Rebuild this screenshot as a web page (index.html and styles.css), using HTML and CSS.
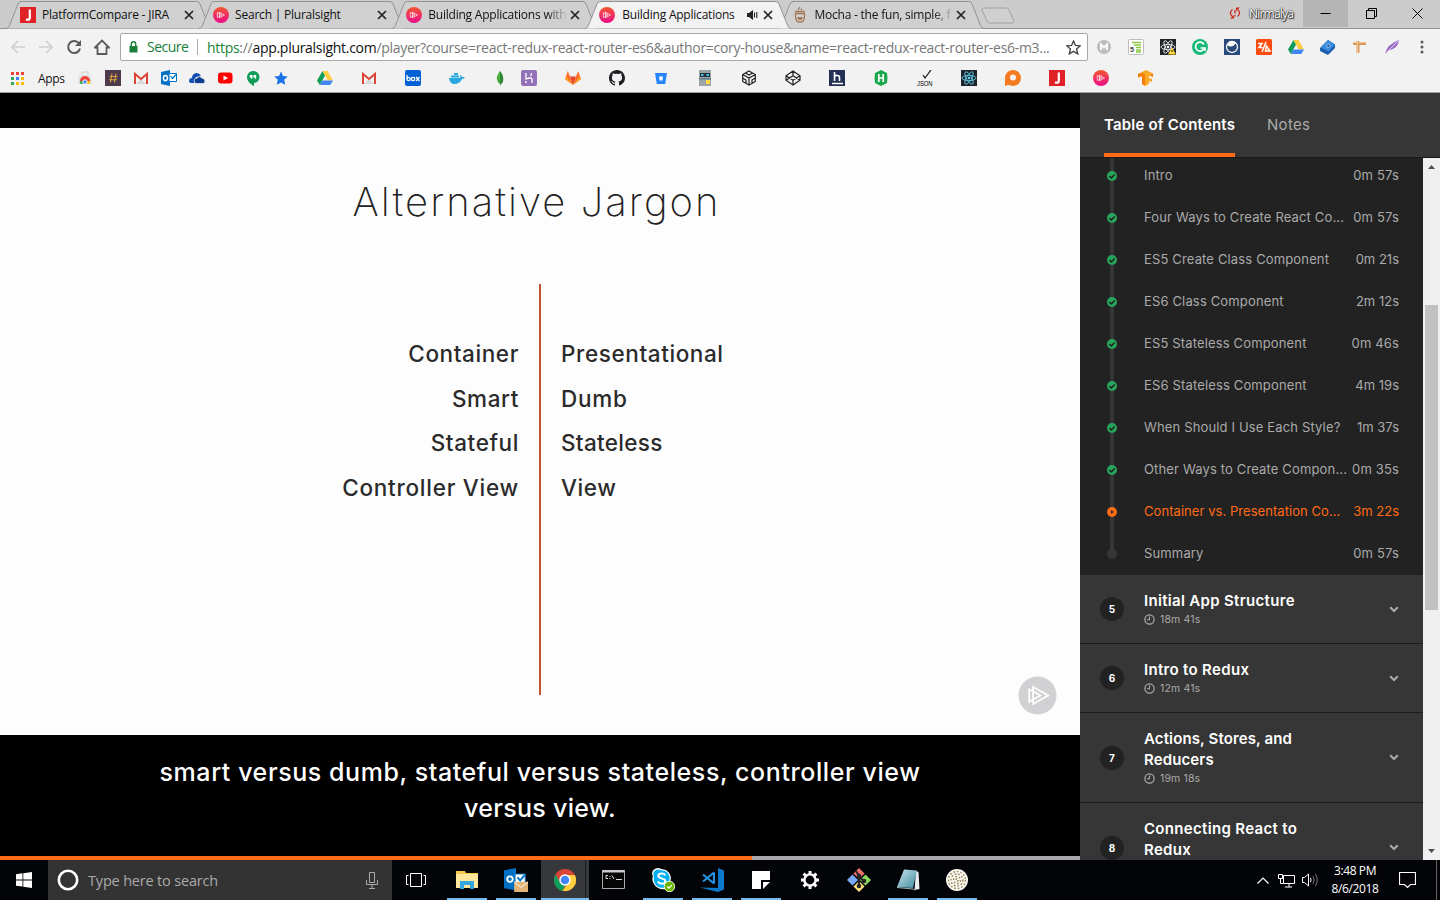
FILE: index.html
```html
<!DOCTYPE html>
<html lang="en">
<head>
<meta charset="utf-8">
<title>Building Applications with React and Redux</title>
<link rel="stylesheet" href="styles.css">
</head>
<body>
<svg class="defs" width="0" height="0">
  <defs>
    <linearGradient id="pink" x1="0" y1="0" x2="0" y2="1"><stop offset="0" stop-color="#f2562f"/><stop offset="1" stop-color="#ec0c8c"/></linearGradient>
    <linearGradient id="pad" x1="0" y1="0" x2="1" y2="1"><stop offset="0" stop-color="#c7e6ea"/><stop offset="1" stop-color="#3f8ba0"/></linearGradient>
    <symbol id="tab" viewBox="0 0 206 29"><path d="M0 28.5C3 28 3 26 4 24L12 4Q13 1.5 15 1.5H191Q193 1.5 194 4L202 24C203 26 203 28 206 28.5" stroke="#939393"/></symbol>
    <symbol id="ps" viewBox="0 0 16 16"><circle cx="8" cy="8" r="8" fill="url(#pink)"/><path d="M4.300 5.500L9 8l-4.700 2.600zM6.500 5.200L11.500 8l-5 2.800z" fill="none" stroke="#fff" stroke-width=".8" stroke-opacity=".85"/></symbol>
    <symbol id="jira" viewBox="0 0 16 16"><path fill="#e02128" d="M0 0h16v16H0z"/><path d="M9.800 2.500v8.200q0 2-2 2-1 0-1.800-.5" fill="none" stroke="#fff" stroke-width="2.200"/></symbol>
    <symbol id="close" viewBox="0 0 10 10"><path d="M1 1l8 8M9 1L1 9" stroke="#222" stroke-width="1.700"/></symbol>
    <symbol id="gmail" viewBox="0 0 16 16"><path fill="#f3f3f3" d="M1 3h14v11H1z"/><path fill="#d9d9d9" d="M3 14l5-5 5 5z"/><path d="M2 14V4l6 5 6-5v10" fill="none" stroke="#db4437" stroke-width="2"/></symbol>
    <symbol id="drive" viewBox="0 0 16 16"><path fill="#0f9d58" d="M5.500 1L8 5.500 2.800 15 0 10.500z"/><path fill="#ffcd40" d="M5.500 1h5L16 10.500h-5.200z"/><path fill="#4285f4" d="M5.300 10.500H16L13.300 15H2.800z"/></symbol>
    <symbol id="react" viewBox="0 0 16 16"><path fill="#20232a" d="M0 0h16v16H0z"/><g fill="none" stroke="currentColor" stroke-width=".8"><ellipse cx="8" cy="8" rx="7" ry="2.600"/><ellipse cx="8" cy="8" rx="7" ry="2.600" transform="rotate(60 8 8)"/><ellipse cx="8" cy="8" rx="7" ry="2.600" transform="rotate(120 8 8)"/></g><circle cx="8" cy="8" r="1.300" fill="currentColor"/></symbol>
    <symbol id="done" viewBox="0 0 10 10"><circle cx="5" cy="5" r="5" fill="#26a65b"/><path d="M2.400 5.100l1.900 1.800 3.400-3.500" fill="none" stroke="#222" stroke-width="1.500"/></symbol>
    <symbol id="clock" viewBox="0 0 10 10"><circle cx="5" cy="5" r="4.200" fill="none" stroke="#aaa" stroke-width="1.100"/><path d="M5 2.300V5.200H2.700" fill="none" stroke="#aaa"/></symbol>
    <symbol id="chev" viewBox="0 0 10 7"><path d="M1.200 1.200L5 5l3.800-3.800" fill="none" stroke="#aaa" stroke-width="2.100"/></symbol>
    <symbol id="outlook" viewBox="0 0 16 16"><path fill="#0072c6" d="M0 2l9-2v16l-9-2z"/><path fill="#fff" stroke="#0072c6" d="M8 3.500h7.500v8H8z"/><path d="M9.500 6l2 2.500 3.500-4" fill="none" stroke="#0072c6" stroke-width="1.200"/><ellipse cx="4.400" cy="8" rx="2" ry="2.600" fill="none" stroke="#fff" stroke-width="1.500"/></symbol>
  </defs>
</svg>

<div class="tabstrip">
  <div class="tab"><svg class="shape"><use href="#tab"/></svg><svg class="fav"><use href="#jira"/></svg><span class="name jira-name">PlatformCompare - JIRA</span><svg class="x"><use href="#close"/></svg></div>
  <div class="tab"><svg class="shape"><use href="#tab"/></svg><svg class="fav"><use href="#ps"/></svg><span class="name">Search | Pluralsight</span><svg class="x"><use href="#close"/></svg></div>
  <div class="tab"><svg class="shape"><use href="#tab"/></svg><svg class="fav"><use href="#ps"/></svg><span class="name fade">Building Applications with</span><svg class="x"><use href="#close"/></svg></div>
  <div class="tab active"><svg class="shape"><use href="#tab"/></svg><svg class="fav"><use href="#ps"/></svg><span class="name">Building Applications</span><svg class="audio" viewBox="0 0 11 10"><path fill="#222" d="M0 3h2l4-3v10L2 7H0z"/><path d="M7.500 2.500v5M9.800 2v6" stroke="#222" stroke-width="1.100"/></svg><svg class="x"><use href="#close"/></svg></div>
  <div class="tab"><svg class="shape"><use href="#tab"/></svg><svg class="fav" viewBox="0 0 16 16"><g fill="none" stroke="#a07858" stroke-width="1.300"><path d="M3.500 6.500h9v2q0 5-2.500 6.500H6Q3.500 13.500 3.500 8.500z"/><path d="M3 4.500h10M6 3l2-3M9 3l1-1.500"/></g><path fill="#a07858" d="M5 10h6l-1.500 3h-3z"/></svg><span class="name fade">Mocha - the fun, simple, f</span><svg class="x"><use href="#close"/></svg></div>
  <svg class="newtab" viewBox="0 0 34 17"><path d="M3 1H25Q27 1 28 3L33 14Q33 16 31 16H9Q7 16 6 14L1 3Q1 1 3 1z" fill="#d0d0d0" stroke="#a2a2a2"/></svg>
  <div class="window">
    <svg class="sync" viewBox="0 0 12 12"><g fill="none" stroke="#d2281e" stroke-width="1.300"><path d="M3.500 2.500C.8 4 .8 8 3.500 9.500M8.500 9.500C11.200 8 11.200 4 8.500 2.500M6 3v3.500M6 8v1.500"/></g><path fill="#d2281e" d="M1 11.500h4V8zM11 .5H7V4z"/></svg>
    <span class="user">Nirmalya</span>
    <span class="wbtn min"><svg width="11" height="11"><path d="M.5 5.500h10" stroke="#000"/></svg></span>
    <span class="wbtn"><svg width="11" height="11"><path d="M.5 2.500h8v8h-8zM2.500 2.500v-2h8v8h-2" fill="none" stroke="#000"/></svg></span>
    <span class="wbtn"><svg width="11" height="11"><path d="M.5.5l10 10M10.500.5l-10 10" stroke="#000"/></svg></span>
  </div>
</div>

<div class="toolbar">
  <div class="nav">
    <svg width="16" height="16" viewBox="0 0 16 16"><path d="M15 8H2M8 2L2 8l6 6" fill="none" stroke="#d0d0d0" stroke-width="1.700"/></svg>
    <svg width="16" height="16" viewBox="0 0 16 16"><path d="M1 8h13M8 2l6 6-6 6" fill="none" stroke="#d0d0d0" stroke-width="1.700"/></svg>
    <svg width="16" height="16" viewBox="0 0 16 16"><path d="M13 4.500A6 6 0 1 0 14 9.500" fill="none" stroke="#5a5a5a" stroke-width="2"/><path fill="#5a5a5a" d="M15 1v6H9z"/></svg>
    <svg width="16" height="16" viewBox="0 0 16 16"><path d="M1 8.500L8 1.500l7 7h-2.500V15h-9V8.500z" fill="none" stroke="#5a5a5a" stroke-width="1.800"/></svg>
  </div>
  <div class="omnibox">
    <svg class="lock" viewBox="0 0 9 12"><path fill="#188038" d="M.5 5h8v6.500h-8z"/><path d="M2.300 5V3a2.200 2.200 0 0 1 4.400 0v2" fill="none" stroke="#188038" stroke-width="1.400"/></svg>
    <span class="secure">Secure</span>
    <span class="url"><span class="https">https</span>://<b>app.pluralsight.com</b>/player?course=react-redux-react-router-es6&amp;author=cory-house&amp;name=react-redux-react-router-es6-m3...</span>
    <svg class="star" viewBox="0 0 14 14"><path d="M7 1l1.800 4.100 4.400.4-3.300 3 1 4.400L7 10.600 3.100 12.900l1-4.400-3.300-3 4.400-.4z" fill="none" stroke="#444" stroke-width="1.300"/></svg>
  </div>
  <div class="exts">
    <svg viewBox="0 0 16 16"><circle cx="8" cy="8" r="7" fill="#bdbdbd"/><path d="M5 11V5.500l3 3 3-3V11" fill="none" stroke="#fff" stroke-width="1.800"/></svg>
    <svg viewBox="0 0 16 16"><rect x=".5" y=".5" width="15" height="15" rx="1" fill="#fff" stroke="#bbb"/><path d="M4 3.500h9M6 6h7M8 8.500h5M8 11h5M8 13h5" stroke="#8bc53f" stroke-width="1.300"/><text x="2" y="13" class="tiny" fill="#444">5</text></svg>
    <svg viewBox="0 0 16 16" color="#fff"><use href="#react"/><path fill="#ffd83a" d="M12 8.500l4 7H8z"/><path d="M12 11v2" stroke="#222"/></svg>
    <svg viewBox="0 0 16 16"><circle cx="8" cy="8" r="8" fill="#15b877"/><path d="M12 5.500A4.500 4.500 0 1 0 12.300 9M8.500 9H13v3" fill="none" stroke="#fff" stroke-width="1.700"/></svg>
    <svg viewBox="0 0 16 16"><path fill="#2a4a7b" d="M0 0h16v16H0z"/><circle cx="8" cy="8" r="5.500" fill="none" stroke="#fff" stroke-width="1.300"/><path d="M3 6q5 4 9-2l-2-2H6z" fill="#fff"/></svg>
    <svg viewBox="0 0 16 16"><rect width="16" height="16" rx="1.500" fill="#ff4a0d"/><path d="M2 4.500h4L3 8.500h3.500M10 3L6 13M9.500 12h4.500L10.500 7z" fill="none" stroke="#fff" stroke-width="1.500"/></svg>
    <svg viewBox="0 0 16 16"><use href="#drive"/></svg>
    <svg viewBox="0 0 16 16"><path fill="#1d5fae" d="M0 9l8-8 7 4.500v3.500L8 16l-8-4z"/><path fill="#3c8be0" d="M1 8.500L8 1l7 4.500-6.500 7z"/><circle cx="8.300" cy="6.800" r="1.700" fill="#1d5fae" stroke="#a5cdf5" stroke-width=".8"/></svg>
    <svg viewBox="0 0 16 16"><path d="M1 4.500h13M6 2v12" stroke="#d99a5b" stroke-width="3"/><path d="M1 3.500h13M5.500 2v12" stroke="#f0c48d"/></svg>
    <svg viewBox="0 0 16 16"><path fill="#9b6cc8" d="M1 15Q3 5 15 1q-1 8-9 10-2 0-4 4z"/><path d="M1 15L14 2" stroke="#dcc7ef"/></svg>
    <svg viewBox="0 0 16 16"><g fill="#5a5a5a"><circle cx="6" cy="3" r="1.500"/><circle cx="6" cy="8" r="1.500"/><circle cx="6" cy="13" r="1.500"/></g></svg>
  </div>
</div>

<div class="bookmarks">
  <div class="apps"><svg viewBox="0 0 13 13"><path fill="#ea4335" d="M0 0h3v3H0zM5 0h3v3H5zM10 0h3v3h-3z"/><path fill="#34a853" d="M0 5h3v3H0zM0 10h3v3H0z"/><path fill="#4285f4" d="M5 5h3v3H5z"/><path fill="#fbbc05" d="M10 5h3v3h-3zM5 10h3v3H5zM10 10h3v3h-3z"/></svg><span>Apps</span></div>
  <div class="bm"><svg viewBox="0 0 16 16"><path fill="#e3e3e3" d="M2 5h12l1 9H1z"/><path d="M5 5V2h6v3" fill="none" stroke="#ccc"/><path fill="#ea4335" d="M3 11a5 5 0 0 1 10 0z"/><path fill="#34a853" d="M2.500 11H6l2 3H3.500z"/><path fill="#fbbc05" d="M13.500 11H10l-2 3h4.500z"/><circle cx="8" cy="12" r="2.200" fill="#4285f4" stroke="#fff"/></svg></div>
  <div class="bm"><svg viewBox="0 0 16 16"><path fill="#4d394b" d="M0 0h16v16H0z"/><path d="M7 3.500l-1.500 9M11 3.500l-1.500 9M4.500 6.500h8M4 9.700h8" stroke="#d9a441" stroke-width="1.100"/></svg></div>
  <div class="bm"><svg><use href="#gmail"/></svg></div>
  <div class="bm"><svg><use href="#outlook"/></svg></div>
  <div class="bm"><svg viewBox="0 0 16 16"><path fill="#1450b4" d="M0 11q0-3 3-3 0-4 4-5 3-.5 5 3l-5 1-2 6H2q-2 0-2-2z"/><path fill="#0b3c91" stroke="#f2f2f2" stroke-width=".7" d="M5 11q0-3 3-3 2-3 5 0 3 1 3 3 0 2.500-2 2.500H8q-3 0-3-2.500z"/></svg></div>
  <div class="bm"><svg viewBox="0 0 16 16"><rect x="1" y="2.500" width="14.500" height="11" rx="3" fill="#f00"/><path fill="#fff" d="M6.500 5.500l4.500 2.500-4.500 2.500z"/></svg></div>
  <div class="bm"><svg viewBox="0 0 16 16"><path fill="#0f9d58" d="M8 1a6 6 0 0 1 1 12v3c-4-2-7-5-7-9a6 6 0 0 1 6-6z"/><path fill="#fff" d="M4.800 5h2.700v3L6.300 9.500V7.700H4.800zM8.500 5h2.700v3L10 9.500V7.700H8.500z"/></svg></div>
  <div class="bm"><svg viewBox="0 0 16 16"><path fill="#1a73e8" d="M8 1.500l2 4.500 4.800.5-3.600 3.300 1 5L8 12.400l-4.200 2.400 1-5L1.200 6.500 6 6z"/></svg></div>
  <div class="bm wide first"><svg><use href="#drive"/></svg></div>
  <div class="bm wide"><svg><use href="#gmail"/></svg></div>
  <div class="bm wide"><svg viewBox="0 0 16 16"><rect width="16" height="16" rx="2" fill="#0061d5"/><path d="M2 5v4" stroke="#fff" stroke-width="1.300"/><circle cx="3.600" cy="9" r="1.600" fill="none" stroke="#fff" stroke-width="1.200"/><circle cx="8" cy="9" r="1.700" fill="none" stroke="#fff" stroke-width="1.300"/><path d="M11 7l3.500 4M14.500 7L11 11" stroke="#fff" stroke-width="1.300"/></svg></div>
  <div class="bm wide"><svg viewBox="0 0 16 16"><path fill="#27a9e0" d="M0 8h11q1-2 0-3 2 0 2 2h3q-1 2-3 2-2 5-8 5-4 0-5-6zM2 5.500h8v2H2zM5 3h4v2H5z"/></svg></div>
  <div class="bm mongo"><svg viewBox="0 0 16 16"><path fill="#4caf3f" d="M8 1q4 5 3 9-1 3-3 4-2-1-3-4-1-4 3-9z"/><path fill="#2e8536" d="M8 1v15l1-2q3-2 2-6 0-3-3-7z"/></svg></div>
  <div class="bm wide"><svg viewBox="0 0 16 16"><rect width="16" height="16" rx="2" fill="#9472b8"/><path d="M5 3v6q5-2 6 0v4M5 11v2M10.500 3q0 2-1 3" fill="none" stroke="#fff" stroke-width="1.300"/></svg></div>
  <div class="bm wide"><svg viewBox="0 0 16 16"><path fill="#e24329" d="M8 15L5 6.500h6z"/><path fill="#fc6d26" d="M8 15L0 9l1-2.500h4zM8 15l8-6-1-2.500h-4zM1 6.500L2.800 1 5 6.500zM15 6.500L13.200 1 11 6.500z"/><path fill="#fca326" d="M8 15L0 9l1-2.500zM8 15l8-6-1-2.500z"/></svg></div>
  <div class="bm wide"><svg viewBox="0 0 16 16"><path fill="#1b1f23" d="M8 0C3.600 0 0 3.600 0 8c0 3.500 2.300 6.500 5.500 7.600.4.100.5-.2.500-.4v-1.500c-2.200.5-2.700-1-2.700-1-.4-.9-.9-1.200-.9-1.200-.7-.5.100-.5.100-.5.800.1 1.200.8 1.200.8.700 1.300 1.900.9 2.300.7.100-.5.300-.9.500-1.100-1.800-.2-3.600-.9-3.600-4 0-.9.300-1.600.8-2.100-.1-.2-.4-1 .1-2.100 0 0 .7-.2 2.200.8a7.600 7.600 0 0 1 4 0c1.500-1 2.200-.8 2.200-.8.400 1.100.2 1.900.1 2.100.5.600.8 1.300.8 2.100 0 3.100-1.900 3.700-3.700 3.900.3.300.6.800.6 1.500v2.200c0 .2.100.5.500.4C13.700 14.500 16 11.500 16 8c0-4.400-3.600-8-8-8z"/></svg></div>
  <div class="bm wide"><svg viewBox="0 0 16 16"><path fill="#2684ff" d="M2 3h12l-1.800 11H3.800z"/><path fill="#fff" d="M6 6.500h4l-.6 4H6.600z"/></svg></div>
  <div class="bm wide"><svg viewBox="0 0 16 16"><path fill="#9aa4a8" d="M2 0h12v16H2z"/><path fill="#263238" d="M3 3h10v4H3z"/><path fill="#3fc1e8" d="M4 4h2.500v2H4zM9.500 4H12v2H9.500z"/><path fill="#ffd740" d="M9 10h4v4H9z"/><path fill="#607d8b" d="M2 8h12v1.500H2z"/></svg></div>
  <div class="bm wide"><svg viewBox="0 0 16 16"><path d="M8 1l6.300 3.500v7L8 15l-6.300-3.500v-7zM1.700 4.500L8 8l6.300-3.500M8 8v7M4.500 2.900L8 5l3.500-2.100M1.700 8L5 10v3.500M14.300 8L11 10v3.500" fill="none" stroke="#222" stroke-width="1.200"/></svg></div>
  <div class="bm wide"><svg viewBox="0 0 16 16"><path d="M8 1l7 4.700v4.600L8 15l-7-4.700V5.700zM1 5.700l7 4.600 7-4.600M1 10.300l7-4.600 7 4.600M8 1v4.700M8 10.300V15" fill="none" stroke="#222" stroke-width="1.200"/></svg></div>
  <div class="bm wide"><svg viewBox="0 0 16 16"><path fill="#232f55" d="M0 0h16v16H0z"/><path d="M5.500 2v9M5.500 7q1-2 3-1.500 2 0 2 2V11M3 13.500h11" fill="none" stroke="#fff" stroke-width="1.600"/></svg></div>
  <div class="bm wide"><svg viewBox="0 0 16 16"><path fill="#1ba94c" d="M8 0l6 3q1 5 0 10l-6 3-6-3Q1 8 2 3z"/><path d="M5.800 4v8M10.200 4v8M5.800 8h4.400" stroke="#fff" stroke-width="1.700"/></svg></div>
  <div class="bm wide"><svg viewBox="0 0 16 16"><path d="M6 5l2 3 6-8" fill="none" stroke="#111" stroke-width="1.200"/><text x="0" y="15.500" class="json" textLength="15.500" lengthAdjust="spacingAndGlyphs">JSON</text></svg></div>
  <div class="bm wide"><svg color="#61dafb"><use href="#react"/></svg></div>
  <div class="bm wide"><svg viewBox="0 0 16 16"><path fill="#f47b20" d="M0 16V8a8 8 0 1 1 8 8q-3-1-5-1z"/><circle cx="8" cy="7.500" r="3" fill="#f2f2f2"/></svg></div>
  <div class="bm wide"><svg><use href="#jira"/></svg></div>
  <div class="bm wide"><svg><use href="#ps"/></svg></div>
  <div class="bm wide"><svg viewBox="0 0 16 16"><path fill="#f9a825" d="M9 0l7 3.500V7l-4-1.500V8l3 1v3l-3-1v3l-4 2V5L1 7.500V4z"/><path fill="#f57c00" d="M1 4v3.500L5 6v8l3 2V4.500L5 3zM16 3.500V7l-3-1.500z"/></svg></div>
</div>

<div class="content">
  <div class="player">
    <div class="slide">
      <h1>Alternative Jargon</h1>
      <div class="compare">
        <ul class="left"><li>Container</li><li>Smart</li><li>Stateful</li><li class="wider">Controller View</li></ul>
        <ul class="right"><li>Presentational</li><li class="wider">Dumb</li><li class="tight">Stateless</li><li>View</li></ul>
      </div>
      <svg class="mark" viewBox="0 0 40 40"><circle cx="20" cy="20" r="19.500" fill="#d1d0d2"/><path d="M11.500 13.500L23 20l-11.500 6.500zM15.500 11.300L31 20l-15.500 8.700z" fill="none" stroke="#fff" stroke-width="1.800"/></svg>
    </div>
    <p class="caption"><span>smart versus dumb, stateful versus stateless, controller view</span><br><span class="second">versus view.</span></p>
    <div class="progress"><div class="played"></div></div>
  </div>

  <aside class="side">
    <div class="side-tabs"><span class="on">Table of Contents</span><span class="off">Notes</span></div>
    <div class="scroller">
      <div class="toc">
        <div class="clips">
          <div class="clip"><svg><use href="#done"/></svg><span class="t">Intro</span><span>0m 57s</span></div>
          <div class="clip"><svg><use href="#done"/></svg><span class="t">Four Ways to Create React Co...</span><span>0m 57s</span></div>
          <div class="clip"><svg><use href="#done"/></svg><span class="t">ES5 Create Class Component</span><span class="narrow">0m 21s</span></div>
          <div class="clip"><svg><use href="#done"/></svg><span class="t">ES6 Class Component</span><span class="narrow">2m 12s</span></div>
          <div class="clip"><svg><use href="#done"/></svg><span class="t">ES5 Stateless Component</span><span>0m 46s</span></div>
          <div class="clip"><svg><use href="#done"/></svg><span class="t">ES6 Stateless Component</span><span class="narrow">4m 19s</span></div>
          <div class="clip"><svg><use href="#done"/></svg><span class="t">When Should I Use Each Style?</span><span class="narrow">1m 37s</span></div>
          <div class="clip"><svg><use href="#done"/></svg><span class="t">Other Ways to Create Compon...</span><span>0m 35s</span></div>
          <div class="clip current"><svg viewBox="0 0 10 10"><circle cx="5" cy="5" r="5" fill="#ff6b16"/><path d="M4 3.300L7 5 4 6.700z" fill="#222"/></svg><span class="t">Container vs. Presentation Co...</span><span class="narrow">3m 22s</span></div>
          <div class="clip"><svg viewBox="0 0 10 10"><circle cx="5" cy="5" r="5" fill="#363636"/></svg><span class="t">Summary</span><span>0m 57s</span></div>
        </div>
        <div class="module"><span class="num">5</span><div class="info"><h2>Initial App Structure</h2><p><svg><use href="#clock"/></svg>18m 41s</p></div><svg class="chev"><use href="#chev"/></svg></div>
        <div class="module"><span class="num">6</span><div class="info"><h2>Intro to Redux</h2><p><svg><use href="#clock"/></svg>12m 41s</p></div><svg class="chev"><use href="#chev"/></svg></div>
        <div class="module"><span class="num">7</span><div class="info"><h2 class="snug">Actions, Stores, and<br>Reducers</h2><p><svg><use href="#clock"/></svg>19m 18s</p></div><svg class="chev"><use href="#chev"/></svg></div>
        <div class="module"><span class="num">8</span><div class="info"><h2>Connecting React to<br>Redux</h2><p></p></div><svg class="chev"><use href="#chev"/></svg></div>
      </div>
      <div class="bar"><svg width="7" height="4"><path d="M0 4L3.500 0 7 4z" fill="#505050"/></svg><i class="thumb"></i><svg class="down" width="7" height="4"><path d="M0 0l3.500 4L7 0z" fill="#505050"/></svg></div>
    </div>
  </aside>
</div>

<div class="taskbar">
  <div class="start"><svg width="16" height="16" viewBox="0 0 16 16"><path fill="#fff" d="M0 2.300L6.500 1.300v6.200H0zM7.300 1.200L16 0v7.500H7.300zM0 8.400h6.500v6.200L0 13.700zM7.300 8.400H16V16l-8.700-1.200z"/></svg></div>
  <div class="search"><svg width="22" height="22" viewBox="0 0 22 22"><circle cx="11" cy="11" r="9.200" fill="none" stroke="#fff" stroke-width="2.600"/></svg><span>Type here to search</span><svg width="12" height="17" viewBox="0 0 12 17"><path d="M3.500.5h5v10h-5zM.5 8v4.500h11V8M6 12.500v4M3 16.500h6" fill="none" stroke="#aaa"/></svg></div>
  <div class="task view"><svg width="20" height="14" viewBox="0 0 20 14"><path d="M4.500.5h11v13h-11zM2.500 2.500h-2v9h2M17.500 2.500h2v9h-2" fill="none" stroke="#fff"/></svg></div>
  <div class="task run"><svg viewBox="0 0 24 24"><path fill="#f5c84c" d="M1 3h9l1 2h12v15H1z"/><path fill="#ffe79c" d="M1 6h22v14H1z"/><path fill="#35a7e0" d="M5 21v-8h14v8h-4v-4H9v4z"/></svg></div>
  <div class="task run"><svg viewBox="0 0 26 26"><path fill="#0072c6" d="M0 2.500L13 0v24L0 22z"/><path fill="#fff" stroke="#0072c6" d="M12 6.500h11v11H12z"/><path d="M14.500 10l3 3.500 5-6" fill="none" stroke="#0072c6" stroke-width="2"/><circle cx="6.500" cy="12" r="3" fill="none" stroke="#fff" stroke-width="2"/><path fill="#e5b577" d="M11 15h15v11H11z"/><path d="M11 15l7.500 6 7.500-6" fill="none" stroke="#fff"/></svg></div>
  <div class="task run lit"><svg viewBox="0 0 24 24"><circle cx="12" cy="12" r="11" fill="#db4437"/><path fill="#0f9d58" d="M2.500 6.500L8 15.500l5 .5-3.500 7A11 11 0 0 1 2.500 6.500z"/><path fill="#ffcd40" d="M12 7h9.800A11 11 0 0 1 9.500 22.800L15 15z"/><circle cx="12" cy="12" r="5" fill="#4285f4" stroke="#fff" stroke-width="1.500"/></svg></div>
  <div class="task"><svg viewBox="0 0 24 24"><path fill="#050505" stroke="#aaa" d="M.5 2.500h22v18H.5z"/><path fill="#ccc" d="M.5 2h22v2.500H.5z"/><path d="M6 7.500H4v3h2M8 8v1M8 10v1M10 7.500l2 3.500M14 11.500h6" fill="none" stroke="#ddd"/></svg></div>
  <div class="task run"><svg viewBox="0 0 26 26"><path fill="#fff" d="M7 0q3 0 4 1 7 0 10 7 1 4 0 6 2 10-8 9-8 0-11-8Q1 12 2 9-1 2 7 0z"/><path fill="#00aff0" d="M7 1.500q2 0 4 1 7 0 9 7v5q0 8-7 7-8 0-10-8V9Q1 3 7 1.500z"/><path d="M15.500 8q-1-2-4-2-3.500 0-3.500 2.500 0 2 4 3t3.500 3Q15 17 12 17q-3.500 0-4.500-2.500" fill="none" stroke="#fff" stroke-width="2.200"/><circle cx="20" cy="20" r="5.700" fill="#6bb700" stroke="#fff"/><path d="M17.500 20l2 1.800 3-3.300" fill="none" stroke="#fff" stroke-width="1.400"/></svg></div>
  <div class="task run"><svg viewBox="0 0 24 24"><path fill="#0a7acc" d="M18 0l6 2.500v19L18 24 0 19.500l18 .5z"/><path d="M14 4.500L3 13.500M3 6.500l11 9M14 4.500v11" fill="none" stroke="#2490df" stroke-width="2.200"/></svg></div>
  <div class="task run"><svg viewBox="0 0 24 24"><path fill="#fff" d="M3 3h18v9h-9v9H3z"/><path fill="#fff" d="M14 21v-7h7z"/></svg></div>
  <div class="task"><svg viewBox="0 0 24 24"><circle cx="12" cy="12" r="5.600" fill="none" stroke="#fff" stroke-width="2.400"/><path d="M12 3v3M12 18v3M3 12h3M18 12h3M5.600 5.600l2.200 2.200M16.200 16.200l2.200 2.200M5.600 18.400l2.200-2.200M16.200 7.800l2.200-2.200" stroke="#fff" stroke-width="3"/></svg></div>
  <div class="task"><svg viewBox="0 0 24 24"><path fill="#f1716b" d="M12 0l5.500 5.500L12 11 6.500 5.500z"/><path fill="#8ddb5c" d="M18.500 6.500L24 12l-5.500 5.500L13 12z"/><path fill="#ffe27a" d="M12 13l5.500 5.500L12 24l-5.500-5.500z"/><path fill="#78a9f5" d="M5.500 6.500L11 12l-5.500 5.500L0 12z"/><path d="M9 3l3 5v10M12 9l5 4" stroke="#252525" stroke-width="2" fill="none"/><g fill="#252525"><circle cx="12" cy="8" r="2.300"/><circle cx="12" cy="18" r="2.300"/><circle cx="17" cy="13" r="2.300"/></g></svg></div>
  <div class="task run"><svg viewBox="0 0 24 24"><path fill="#e8eef0" d="M20 3l2.500 1 1 17-5 1z"/><path fill="url(#pad)" d="M8 1.500l13 1L17 20l-16-1z"/><path d="M1 19.500l16 1.500 2 1" fill="none" stroke="#9db4bb"/></svg></div>
  <div class="task run"><svg viewBox="0 0 24 24"><circle cx="12" cy="12" r="11" fill="#f8f7f2"/><g fill="none" stroke="#9c8956" stroke-width="1.400" stroke-dasharray="1.700 1.900"><circle cx="12" cy="12" r="8.500"/><circle cx="12" cy="12" r="6"/><circle cx="12" cy="12" r="3.500"/><circle cx="12" cy="12" r="1.200"/></g></svg></div>
  <div class="tray">
    <svg width="12" height="7" viewBox="0 0 12 7"><path d="M.5 6.500L6 1l5.500 5.500" fill="none" stroke="#fff" stroke-width="1.200"/></svg>
    <svg width="17" height="15" viewBox="0 0 17 15"><path d="M5.500 2.500h11v8h-11zM11 10.500v3.500M7 14h7M.5 1.500h4v4h-4zM2.500 5.500v5h3" fill="none" stroke="#fff"/></svg>
    <svg width="17" height="14" viewBox="0 0 17 14"><path d="M.5 4.500h2l4-3.500v12l-4-3.500h-2zM8.500 5q1 2 0 4" fill="none" stroke="#fff"/><path d="M11 3q2.500 4 0 8M13.500 1q3.500 6 0 12" fill="none" stroke="#777"/></svg>
    <div class="time">3:48 PM<br>8/6/2018</div>
    <svg width="17" height="17" viewBox="0 0 17 17"><path d="M.5.500h16v12h-5l-3 3-3-3h-5z" fill="none" stroke="#fff" stroke-width="1.200"/></svg>
  </div>
  <i class="desk"></i>
</div>
</body>
</html>
```
FILE: styles.css
```css
* { box-sizing: border-box; }
body {
  margin: 0; width: 1440px; height: 900px; overflow: hidden;
  display: flex; flex-direction: column;
  font-family: "Open Sans", "Noto Sans", sans-serif; font-size: 12px; color: #111;
}
svg { display: block; flex: none; }
h1, h2, p, ul { margin: 0; padding: 0; list-style: none; }
.defs { position: absolute; }

/* Tabs */
.tabstrip { height: 29px; flex: none; background: linear-gradient(#ccc 28px, #939393 28px); display: flex; padding-left: 6px; }
.tab { position: relative; width: 206px; height: 29px; margin-right: -12.900px; padding: 1px 18px 0 14px; display: flex; align-items: center; flex: none; }
.tab .shape { position: absolute; left: 0; top: 0; width: 206px; height: 29px; fill: #d0d0d0; }
.tab.active { z-index: 2; }
.tab.active .fav { margin-right: 7px; }
.tab.active .shape { fill: #f2f2f2; }
.tab > :not(.shape) { position: relative; }
.fav { width: 16px; height: 16px; margin-right: 6px; }
.name { flex: 1; min-width: 0; white-space: nowrap; letter-spacing: -.22px; margin-right: 4px; line-height: 20px; }
.fade { -webkit-mask-image: linear-gradient(90deg, #000 86%, rgba(0,0,0,.1)); mask-image: linear-gradient(90deg, #000 86%, rgba(0,0,0,.1)); }
.x { width: 10px; height: 10px; }
.audio { width: 11px; height: 10px; margin-right: 5px; }
.newtab { width: 34px; height: 17px; margin: 7px 0 0 9px; }
.window { margin-left: auto; display: flex; align-items: flex-start; }
.sync { width: 12px; height: 12px; margin: 7px 8px 0 0; }
.user { color: #fff; text-shadow: 0 0 2px #222, 0 0 1px #222, 1px 1px 1px #333; width: 54px; line-height: 28px; letter-spacing: -.8px; }
.wbtn { width: 46px; height: 27px; display: grid; place-items: center; }
.min { background: #b5b5b5; width: 45px; }

/* Toolbar */
.toolbar { height: 33px; flex: none; background: #f2f2f2; display: flex; padding: 4px 0 0 10px; }
.nav { display: flex; gap: 12px; padding-top: 6px; width: 110px; }
.omnibox { width: 968px; height: 28px; background: #fff; border: 1px solid #a8a8a8; border-radius: 2px; display: flex; align-items: center; padding: 0 6px 0 8px; font-size: 14px; }
.lock { width: 9px; height: 12px; margin-right: 9px; }
.secure { flex: none; color: #188038; width: 51px; border-right: 1px solid #aaa; line-height: 16px; height: 16px; letter-spacing: -.5px; }
.secure, .url { white-space: nowrap; }
.url { flex: 1; padding-left: 9px; color: #777; letter-spacing: -.29px; }
.url b { font-weight: 400; color: #111; }
.https { color: #188038; }
.star { width: 15px; height: 15px; }
.exts { display: flex; gap: 16px; padding: 6px 0 0 8px; }
.exts svg, .bm svg { width: 16px; height: 16px; }
.tiny { font: 700 7px "Liberation Sans", sans-serif; }
.json { font: 6.500px "Liberation Sans", sans-serif; }

/* Bookmarks */
.bookmarks { height: 31px; flex: none; background: #f2f2f2; border-bottom: 1px solid #a0a0a0; display: flex; align-items: center; padding-top: 2px; }
.apps { width: 71px; display: flex; gap: 14px; padding-left: 11px; align-items: center; letter-spacing: -.3px; }
.apps svg { width: 13px; height: 13px; }
.bm { width: 28px; display: flex; justify-content: center; flex: none; }
.wide { width: 44px; }
.first { margin-left: 8px; }
.mongo { padding-left: 14px; justify-content: flex-start; }
.mongo svg { margin-left: -1px; }

/* Player */
.content { flex: 1; min-height: 0; display: flex; font-family: Inter, "Open Sans", sans-serif; }
.player { width: 1080px; background: #000; padding-top: 35px; display: flex; flex-direction: column; }
.slide { position: relative; height: 607px; background: #fefdfe; color: #2b2b2b; padding-top: 44px; }
h1 { font-size: 40px; line-height: 59px; height: 60px; font-weight: 200; text-align: center; letter-spacing: 2.050px; margin-right: 7px; color: #222; }
.compare { margin-top: 52px; height: 411px; display: flex; font-size: 22.500px; font-weight: 500; line-height: 44.600px; letter-spacing: .6px; padding-top: 48px; background: linear-gradient(#bf5232, #bf5232) 539px 0 / 2px 411px no-repeat; }
.wider { letter-spacing: .75px; }
.tight { letter-spacing: .3px; }
.left { width: 519px; text-align: right; }
.right { padding-left: 42px; }
.mark { position: absolute; left: 1018px; top: 548px; width: 39px; height: 39px; }
.caption { height: 121px; padding-top: 19px; text-align: center; color: #fff; font-size: 25px; font-weight: 450; line-height: 36px; letter-spacing: .58px; }
.second { letter-spacing: .3px; }
.progress { height: 4px; background: #a8a8a8; }
.played { width: 752px; height: 4px; background: #ff6b16; }

/* Sidebar */
.side { width: 360px; background: #363636; color: #fff; display: flex; flex-direction: column; }
.side-tabs { height: 65px; flex: none; border-bottom: 1px solid #1b1b1b; display: flex; padding-left: 24px; gap: 32px; font-size: 15px; line-height: 64px; }
.on { width: 131px; font-weight: 600; border-bottom: 4px solid #ff6b16; white-space: nowrap; letter-spacing: .18px; }
.off { color: #aaa; letter-spacing: .3px; }
.scroller { flex: 1; min-height: 0; display: flex; }
.toc { width: 343px; overflow: hidden; }
.clips { margin-top: -3px; background: linear-gradient(#363636, #363636) 30px 0 / 4px 399px no-repeat #222; }
.clip { height: 42px; display: flex; align-items: center; padding: 0 24px 0 27px; color: #aaa; font-size: 13px; letter-spacing: .15px; white-space: nowrap; }
.clip svg { width: 10px; height: 10px; margin-right: 27px; }
.clip span { padding-bottom: 2px; }
.clip .t { flex: 1; }
.clip .narrow { letter-spacing: 0; }
.clip.current { color: #ff6b16; letter-spacing: .06px; }
.module { display: flex; align-items: center; padding: 16px 24px 16px 20px; border-bottom: 1px solid #1b1b1b; }
.num { width: 24px; height: 24px; border-radius: 50%; background: #222; font-size: 10px; font-weight: 700; line-height: 24px; text-align: center; margin-right: 20px; flex: none; }
.info { flex: 1; margin-top: -1px; }
h2 { font-size: 15px; line-height: 21px; font-weight: 600; letter-spacing: .32px; }
.snug { letter-spacing: .12px; }
.info p { height: 15px; margin-top: 1px; display: flex; align-items: center; gap: 5px; font-size: 10.500px; color: #aaa; letter-spacing: .15px; }
.info p svg { width: 11px; height: 11px; }
.chev { width: 10px; height: 7px; }
.bar { width: 17px; background: #f0f0f0; display: flex; flex-direction: column; align-items: center; padding: 7px 0; }
.thumb { width: 13px; height: 305px; background: #c1c1c1; margin-top: 136px; }
.down { margin-top: auto; }

/* Taskbar */
.taskbar { height: 40px; flex: none; background: #020408; color: #fff; display: flex; }
.start { width: 48px; display: grid; place-items: center; }
.search { width: 344px; background: #333; color: #aaa; display: flex; align-items: center; padding: 0 14px 0 9px; font-size: 14.500px; letter-spacing: -.18px; }
.search span { flex: 1; padding-left: 9px; }
.task { width: 49px; display: grid; place-items: center; flex: none; padding-right: 2px; }
.task svg { width: 24px; height: 24px; }
.task.view { width: 51px; padding-right: 3px; }
.task.view svg { width: 20px; height: 14px; }
.run { background: linear-gradient(#76b9ed, #76b9ed) 4px 38px / 40px 2px no-repeat; }
.lit { background: linear-gradient(#76b9ed, #76b9ed) 0 38px / 48px 2px no-repeat, linear-gradient(90deg, #36383b 44px, #1c1e20 44px 45px, #36383b 45px 48px, #020408 48px); }
.tray { margin-left: auto; display: flex; align-items: center; gap: 9px; }
.tray svg:nth-of-type(2), .tray svg:nth-of-type(3) { margin-right: -2px; }
.time { width: 58px; text-align: center; font-size: 12px; line-height: 18px; letter-spacing: -.4px; margin-right: 6px; }
.desk { width: 4px; margin-left: 20px; border-left: 1px solid #666; }
```
